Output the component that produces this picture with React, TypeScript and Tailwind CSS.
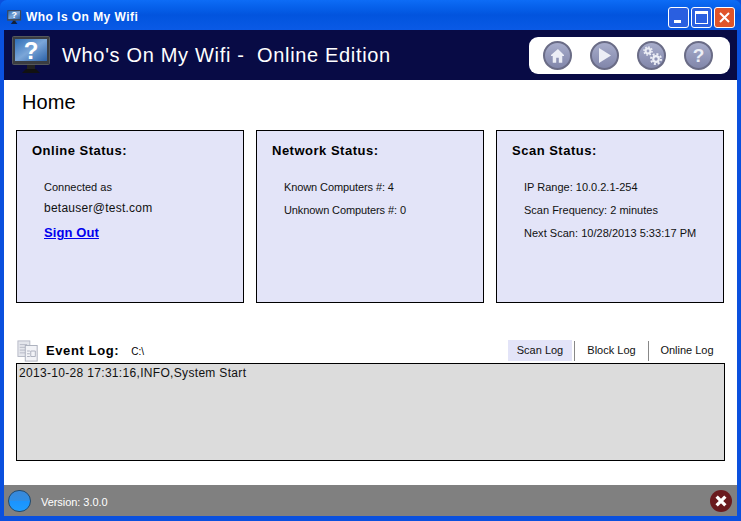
const sans = "font-['Liberation_Sans',Arial,sans-serif]";

function Monitor({ w, h, id }: { w: number; h: number; id: string }) {
  return (
    <svg width={w} height={h} viewBox="0 0 40 38" className="shrink-0">
      <defs>
        <linearGradient id={id} x1="0" y1="0" x2="1" y2="1">
          <stop offset="0" stopColor="#2f6fb8" />
          <stop offset="0.5" stopColor="#7ba6d8" />
          <stop offset="1" stopColor="#2c62a8" />
        </linearGradient>
      </defs>
      <rect x="0.5" y="0.5" width="37" height="28" rx="1" fill="#3a3d42" stroke="#55585c" />
      <rect x="3" y="3" width="32" height="22" fill={`url(#${id})`} />
      <rect x="15" y="29" width="8" height="4" fill="#222" />
      <path d="M10 37 L14 33 H24 L28 37 Z" fill="#111" />
      <text x="19" y="23" textAnchor="middle" fontSize="24" fontWeight="700" fill="#fff" fontFamily="Liberation Sans">?</text>
    </svg>
  );
}

function NavBtn({ children }: { children: React.ReactNode }) {
  return (
    <div className="w-[29px] h-[29px] rounded-full border-2 border-[#6a6c86] bg-gradient-to-b from-[#a8adcb] to-[#8186aa] flex items-center justify-center">
      {children}
    </div>
  );
}

function Card({ title, lines }: { title: string; lines: React.ReactNode }) {
  return (
    <div className="w-[228px] h-[173px] border border-black bg-[#e3e4f8] pl-[15px] pt-[12px]">
      <div className="text-[13px] leading-[16px] font-bold text-black tracking-[0.5px]">{title}</div>
      <div className="pl-[12px] pt-[21px] text-[11px] text-[#111]">{lines}</div>
    </div>
  );
}

export default function App() {
  return (
    <div className={`w-[741px] h-[521px] overflow-hidden flex flex-col bg-[#0a50de] ${sans}`}>
      <div className="h-[30px] shrink-0 flex items-center bg-gradient-to-b from-[#0d6cf6] via-[#0254de] to-[#0a5ae6] rounded-t-[7px] pt-[4px] pl-[7px] pr-[6px]">
        <Monitor w={15} h={14} id="scr-small" />
        <span className="ml-[4px] text-[12px] font-bold text-white tracking-[0.45px]">Who Is On My Wifi</span>
        <div className="ml-auto flex gap-[2px]">
          <div className="w-[21px] h-[21px] rounded-[3px] border border-white bg-[#2a5fe0] flex items-end pl-[5px] pb-[4px]">
            <div className="w-[7px] h-[3px] bg-white" />
          </div>
          <div className="w-[21px] h-[21px] rounded-[3px] border border-white bg-[#2a5fe0] flex items-center justify-center">
            <div className="w-[13px] h-[13px] border border-white border-t-[3px]" />
          </div>
          <div className="w-[21px] h-[21px] rounded-[3px] border border-white bg-[#e0542a] flex items-center justify-center">
            <svg width="13" height="13" viewBox="0 0 13 13"><path d="M2 2 L11 11 M11 2 L2 11" stroke="#fff" strokeWidth="2" /></svg>
          </div>
        </div>
      </div>

      <div className="flex-1 min-h-0 mx-[4px] flex flex-col bg-white">
        <div className="h-[50px] shrink-0 bg-[#080b45] flex items-center pl-[8px] pr-[7px]">
          <Monitor w={40} h={38} id="scr-large" />
          <span className="ml-[10px] text-[20px] text-white tracking-[0.67px] whitespace-pre">Who's On My Wifi -  Online Edition</span>
          <div className="ml-auto w-[201px] h-[37px] bg-white rounded-[9px] flex items-center pl-[14px] gap-[18px]">
            <NavBtn>
              <svg width="13" height="15" viewBox="0 0 15 17"><path d="M0 8 L8 1 L15 8 V9 H13 V17 H9 V11 H6 V17 H2 V9 H0 Z" fill="#eceef6" /></svg>
            </NavBtn>
            <NavBtn>
              <svg width="15" height="17" viewBox="0 0 15 17"><path d="M2 1 L14 8.5 L2 16 Z" fill="#eceef6" /></svg>
            </NavBtn>
            <NavBtn>
              <svg width="22" height="21" viewBox="0 0 22 21" fill="none" stroke="#eceef6">
                <circle cx="7" cy="6" r="2.4" strokeWidth="2" />
                <circle cx="7" cy="6" r="4" strokeWidth="1.6" strokeDasharray="1.6 1.5" />
                <circle cx="15" cy="14" r="2.8" strokeWidth="2.2" />
                <circle cx="15" cy="14" r="5" strokeWidth="2" strokeDasharray="2 1.9" />
              </svg>
            </NavBtn>
            <NavBtn>
              <span className="text-[19px] font-bold text-[#eceef6] leading-none">?</span>
            </NavBtn>
          </div>
        </div>

        <div className="flex-1 min-h-0 flex flex-col px-[12px]">
          <div className="pl-[6px] pt-[10px] h-[50px] shrink-0 text-[20px] leading-[24px] text-black tracking-[0.1px]">Home</div>
          <div className="flex gap-[12px] shrink-0">
            <Card
              title="Online Status:"
              lines={
                <>
                  <div className="leading-[14px]">Connected as</div>
                  <div className="mt-[7px] text-[12px] leading-[14px] tracking-[0.25px]">betauser@test.com</div>
                  <a className="block mt-[10px] text-[13px] leading-[16px] font-bold text-[#0000ee] underline tracking-[0.1px]">Sign Out</a>
                </>
              }
            />
            <Card
              title="Network Status:"
              lines={
                <>
                  <div className="leading-[14px] -tracking-[0.1px]">Known Computers #: 4</div>
                  <div className="mt-[9px] leading-[14px] -tracking-[0.1px]">Unknown Computers #: 0</div>
                </>
              }
            />
            <Card
              title="Scan Status:"
              lines={
                <>
                  <div className="leading-[14px]">IP Range: 10.0.2.1-254</div>
                  <div className="mt-[9px] leading-[14px]">Scan Frequency: 2 minutes</div>
                  <div className="mt-[9px] leading-[14px] tracking-[0.03px]">Next Scan: 10/28/2013 5:33:17 PM</div>
                </>
              }
            />
          </div>

          <div className="mt-[37px] h-[22px] shrink-0 flex items-end">
            <svg width="22" height="22" viewBox="0 0 24 24" className="shrink-0 ml-[1px]">
              <rect x="1" y="1" width="13" height="17" fill="#e4e6ec" stroke="#b4b8c4" />
              <path d="M3 5h8M3 8h8M3 11h8M3 14h8" stroke="#b4b8c4" />
              <rect x="9" y="6" width="13" height="17" fill="#f2f3f7" stroke="#a8adba" />
              <path d="M11 12h3M11 15h3M11 18h3M15 12h5v6h-5z" stroke="#a8adba" fill="none" />
            </svg>
            <span className="ml-[7px] mb-[2px] text-[13px] leading-[18px] font-bold text-black tracking-[0.6px]">Event Log:</span>
            <span className="ml-[12px] mb-[2px] text-[10px] leading-[17px] text-black">C:\</span>
            <div className="ml-auto mb-[1px] flex items-center text-[11px] text-[#111]">
              <div className="w-[64px] h-[21px] bg-[#e3e4f8] flex items-center justify-center">Scan Log</div>
              <div className="ml-[2px] w-px h-[20px] bg-[#888]" />
              <div className="w-[73px] h-[21px] flex items-center justify-center">Block Log</div>
              <div className="w-px h-[20px] bg-[#888]" />
              <div className="w-[76px] h-[21px] flex items-center justify-center">Online Log</div>
            </div>
          </div>

          <div className="mt-[1px] h-[98px] shrink-0 border border-black bg-[#dcdcdc] px-[2px] pt-[1px] text-[12px] leading-[16px] text-[#111] tracking-[0.32px]">
            2013-10-28 17:31:16,INFO,System Start
          </div>

          <div className="flex-1" />
        </div>

        <div className="h-[31px] shrink-0 bg-[#808080] flex items-center pl-[4px] pr-[5px]">
          <div className="w-[23px] h-[22px] rounded-full border border-[#204a70] bg-[linear-gradient(180deg,#3a88d8_0%,#2f8ee6_48%,#1a94ff_52%,#1e9cff_100%)]" />
          <span className="ml-[10px] mt-[3px] text-[11px] text-white -tracking-[0.05px]">Version: 3.0.0</span>
          <div className="ml-auto w-[22px] h-[22px] rounded-full bg-[#6a1a1e] flex items-center justify-center">
            <svg width="12" height="12" viewBox="0 0 11 11"><path d="M1.5 1.5 L9.5 9.5 M9.5 1.5 L1.5 9.5" stroke="#fff" strokeWidth="3" /></svg>
          </div>
        </div>
      </div>
      <div className="h-[5px] shrink-0" />
    </div>
  );
}
